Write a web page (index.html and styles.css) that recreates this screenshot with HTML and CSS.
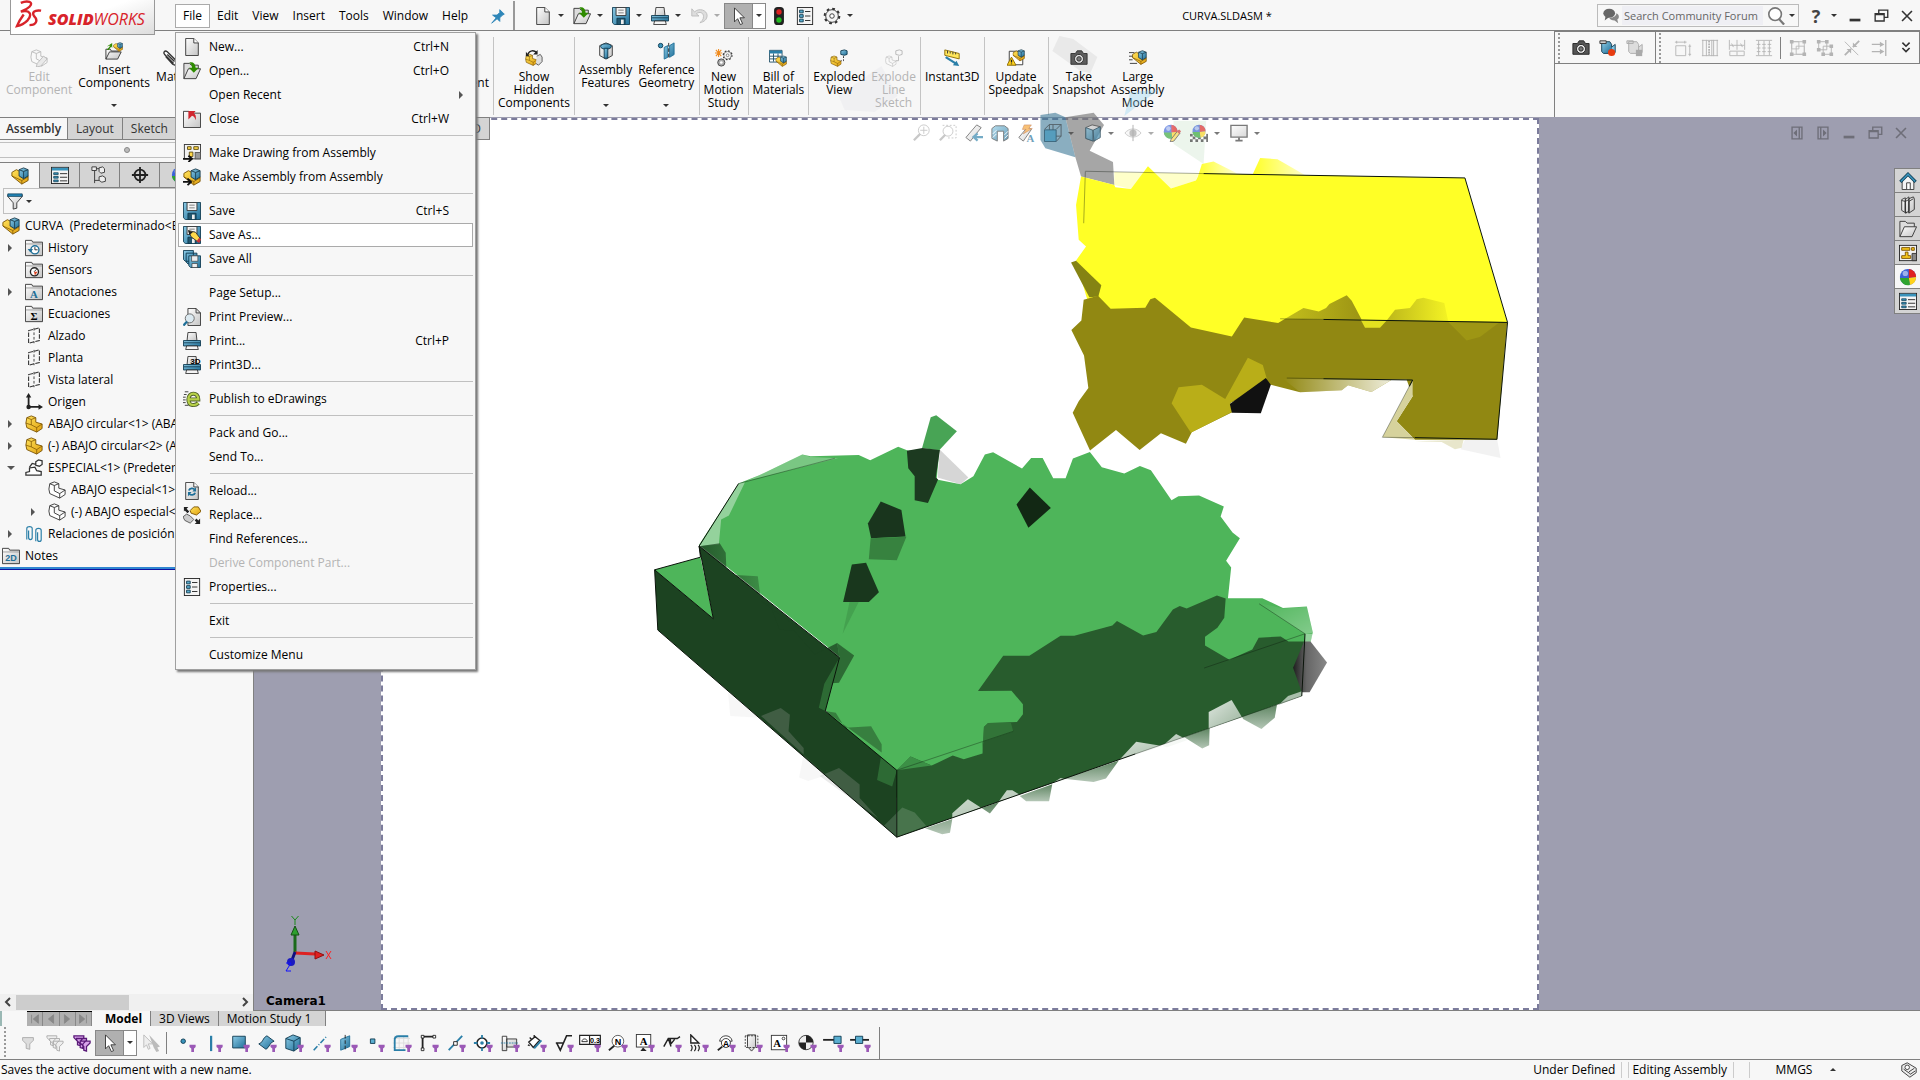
FILE: index.html
```html
<!DOCTYPE html>
<html lang="en">
<head>
    <meta charset="UTF-8">
    <title>SOLIDWORKS - CURVA.SLDASM</title>
    <link rel="stylesheet" href="styles.css">
</head>
<body>
    <svg class="sprite" aria-hidden="true">
        <defs>
            <linearGradient id="paper" x1="0" y1="0" x2="1" y2="1"><stop offset="0" stop-color="#fff"/><stop offset="1" stop-color="#c4c4c4"/></linearGradient>
            <linearGradient id="steel" x1="0" y1="0" x2="1" y2="1"><stop offset="0" stop-color="#8ccbe6"/><stop offset="1" stop-color="#1f6f98"/></linearGradient>
            <linearGradient id="gold" x1="0" y1="0" x2="1" y2="1"><stop offset="0" stop-color="#ffe25a"/><stop offset="1" stop-color="#e0a010"/></linearGradient>
        </defs>
    </svg>
    <svg class="symbols" aria-hidden="true">
        <symbol id="i-new" viewBox="0 0 20 20"><path d="M3 .500h9l5 5v14H3z" fill="url(#paper)" stroke="#333"/><path d="M12 .500v5h5" fill="#fff" stroke="#333"/></symbol>
        <symbol id="i-folder" viewBox="0 0 20 20"><path d="M1 18.500V1.500h6l2 2h8v4" fill="#ddd" stroke="#333"/><path d="M1 18.500L6 7.500h13.500l-5 11z" fill="url(#paper)" stroke="#333"/></symbol>
        <symbol id="i-open" viewBox="0 0 20 20"><use href="#i-folder"/><path d="M7 .500c4-1 7 1 7 6h3.500L12 12 6.500 6.500H10c0-3-1-4-3-6z" fill="#2e8b00"/></symbol>
        <symbol id="i-close" viewBox="0 0 20 20"><path d="M.500 19.500V1.500h6l1 2h12v16z" fill="url(#paper)" stroke="#333"/><path d="M6 1h8l-2 2.500c2 1 3 4 2 8-1-3.500-2-4.500-4-5l-4 4z" fill="#d0262f"/></symbol>
        <symbol id="i-block" viewBox="0 0 20 20"><path d="M1 9l1-6 5-2 5 2v5l7 2v5l-6 4-11-5z" fill="url(#gold)" stroke="#7a5200"/><path d="M2 3l5 2 5-2M7 5v6l6 3 6-4M13 14v5M1 9l6 2" fill="none" stroke="#7a5200" stroke-width=".8"/></symbol>
        <symbol id="i-asm" viewBox="0 0 20 20"><path d="M1 10V6l5-3 4 2v5l3 2 6-2v5l-7 4z" fill="url(#gold)" stroke="#7a5200"/><path d="M1 10l11 5v4M12 15l7-4" fill="none" stroke="#7a5200" stroke-width=".8"/><path d="M9 3l5-2 5 2v7l-5 3-5-3z" fill="url(#steel)" stroke="#1c3c4c"/><path d="M9 3l5 2 5-2M14 5v8" fill="none" stroke="#1c3c4c"/></symbol>
        <symbol id="i-makedrw" viewBox="0 0 20 20"><rect x="1.500" y=".5" width="18" height="16" fill="#f2f2f2" stroke="#333"/><path d="M5 3h4v3H5zM12 3h5v3h-5zM7 9h4v5H7z" fill="#ffd84a" stroke="#5a4a10"/><rect x="13.500" y="9.500" width="6" height="7" fill="#999" stroke="#555"/><path d="M0 16.500h9M6 13l4 3.500L6 20" fill="none" stroke="#111" stroke-width="2"/></symbol>
        <symbol id="i-makeasm" viewBox="0 0 20 20"><use href="#i-asm"/><path d="M0 15.500h8M5 12l4 3.500L5 19" fill="none" stroke="#111" stroke-width="2"/></symbol>
        <symbol id="i-save" viewBox="0 0 20 20"><path d="M.500 .500h19v19h-17l-2-2z" fill="url(#steel)" stroke="#0e3a50"/><path d="M4.500 .500h11v9h-11z" fill="#f4f4f4" stroke="#333"/><path d="M7 3.500h6M7 6.500h6" stroke="#777"/><path d="M5.500 12.500h9v7h-9z" fill="#23566e" stroke="#0e3a50"/><path d="M10 14h3v5h-3z" fill="#eee"/></symbol>
        <symbol id="i-saveas" viewBox="0 0 20 20"><use href="#i-save"/><path d="M6 5l3 7 8 6 3-3-6-8z" fill="#ffd84a" stroke="#333"/><path d="M6 5l1 5 4-3z" fill="#222"/><path d="M15 17l3 2 2-4-2-2z" fill="#c8323c"/></symbol>
        <symbol id="i-saveall" viewBox="0 0 20 20"><path d="M.500 .500h11v12h-9l-2-2zM3.500 3.500h12v12h-10l-2-2z" fill="url(#steel)" stroke="#0e3a50"/><path d="M6.500 6.500h13v13h-11l-2-2z" fill="url(#steel)" stroke="#0e3a50"/><path d="M9.500 6.500h7v6h-7zM10 15h6v4.500h-6z" fill="#eee" stroke="#333" stroke-width=".7"/></symbol>
        <symbol id="i-preview" viewBox="0 0 20 20"><path d="M5.500 .500h9l5 5v14h-14z" fill="url(#paper)" stroke="#333"/><path d="M14.500 .500v5h5" fill="none" stroke="#333"/><circle cx="7.500" cy="11.500" r="5" fill="#dbe9f0" stroke="#666"/><path d="M4.500 15L.500 19.500" stroke="#1f6f98" stroke-width="2.500"/></symbol>
        <symbol id="i-print" viewBox="0 0 20 20"><path d="M5.500 .500h9l1 9h-11z" fill="url(#paper)" stroke="#333"/><path d="M.500 9.500h19v6H.500z" fill="url(#steel)" stroke="#0e3a50"/><path d="M1 12h18" stroke="#0e3a50"/><path d="M4 15.500h12l1 4H3z" fill="#f4f4f4" stroke="#333"/></symbol>
        <symbol id="i-print3d" viewBox="0 0 20 20"><use href="#i-print"/><text x="8" y="9" class="icon-3d">3D</text></symbol>
        <symbol id="i-edraw" viewBox="0 0 20 20"><path d="M7 10.500h10c0-9-11-8-11 0 0 8 8 7 11 4" fill="none" stroke="#50602a" stroke-width="4.500"/><path d="M7 10.500h10c0-9-11-8-11 0 0 8 8 7 11 4" fill="none" stroke="#b7d148" stroke-width="2.500"/><path d="M2 2h4M1 5h3M0 8h3M0 11h3M0 14h3M2 17h4" stroke="#333"/></symbol>
        <symbol id="i-reload" viewBox="0 0 20 20"><use href="#i-new"/><path d="M6.500 9.500c1-3 5-3 6.500-1M13.500 12c-1 3-5 3-6.500 1" fill="none" stroke="#1f6f98" stroke-width="2"/><path d="M14.500 5.500v5h-4zM5.500 16v-5h4z" fill="#1f6f98"/></symbol>
        <symbol id="i-replace" viewBox="0 0 20 20"><path d="M8 5l4-4 5 0 3 5-5 4-6-2z" fill="url(#gold)" stroke="#7a5200"/><path d="M0 12l4-3 4 2 4 4-4 4-6-3z" fill="#ccc" stroke="#555"/><path d="M1 6V1h5L4 3l3 3-2 2-3-3zM19 14v6h-6l2-2-2-2 2-2 2 2z" fill="#222"/></symbol>
        <symbol id="i-props" viewBox="0 0 20 20"><rect x="1.500" y=".5" width="17" height="19" fill="#f4f4f4" stroke="#222"/><path d="M4 3.500h4v3H4zM4 8.500h4v3H4zM4 13.500h4v3H4z" fill="#5aaed0" stroke="#0e3a50"/><path d="M10 5h6M10 10h6M10 15h6" stroke="#222"/></symbol>
        <symbol id="i-list" viewBox="0 0 20 20"><rect x=".5" y="1.500" width="19" height="18" fill="#f4f4f4" stroke="#222"/><path d="M1 2h18v3H1z" fill="#3a94bc"/><path d="M3 7.500h5v2H3zM3 11.500h5v2H3zM3 15.500h5v2H3z" fill="#3a94bc" stroke="#0e3a50" stroke-width=".8"/><path d="M10 8.500h8M10 12.500h8M10 16.500h8" stroke="#222"/></symbol>
        <symbol id="i-cursor" viewBox="0 0 20 20"><path d="M5 1v15.500l3.500-3.500 3 6.500 2.500-1-3-6.500H16z" fill="#fff" stroke="#333"/></symbol>
        <symbol id="i-undo" viewBox="0 0 20 20"><path d="M2 2v8h8L7 7.500c4-3 8-1 8 3s-2 5-4 7c5-1 8-4 8-8 0-6-9-9-14-4z" fill="#ddd" stroke="#bbb"/></symbol>
        <symbol id="i-traffic" viewBox="0 0 20 20"><rect x="4.500" y="0" width="11" height="20" rx="4" fill="#222"/><circle cx="10" cy="5.500" r="3" fill="#d22"/><circle cx="10" cy="14.500" r="3" fill="#2b2"/></symbol>
        <symbol id="i-gear" viewBox="0 0 20 20"><circle cx="10" cy="10" r="8" fill="none" stroke="#333" stroke-width="2.500" stroke-dasharray="3 3.280"/><circle cx="10" cy="10" r="7" fill="#f4f4f4" stroke="#333"/><circle cx="10" cy="10" r="2.500" fill="#fff" stroke="#333"/></symbol>
        <symbol id="i-pin" viewBox="0 0 20 20"><path d="M12 3l5 5-2 1-3 3v4l-3-3-6 5 5-6-4-3h5l3-3z" fill="#2e86b8" stroke="#2e86b8"/></symbol>
        <symbol id="i-clip" viewBox="0 0 20 20"><path d="M14 16L4 6c-2-2 0-5 3-3l10 10c2 3-1 6-4 4L5 8M7 6l8 8" fill="none" stroke="#333" stroke-width="1.500"/></symbol>
        <symbol id="i-config" viewBox="0 0 20 20"><path d="M4 1v18M4 3h5M4 16h5" stroke="#333" fill="none"/><path d="M1 1h5v4H1zM9 2l4-1 2 2v4l-4 1-2-2zM9 12l4-1 3 2v4l-4 1-3-2z" fill="#eee" stroke="#333"/></symbol>
        <symbol id="i-target" viewBox="0 0 20 20"><circle cx="10" cy="10" r="6" fill="none" stroke="#222" stroke-width="2"/><path d="M10 1v18M1 10h18" stroke="#222" stroke-width="2"/></symbol>
        <symbol id="i-ball" viewBox="0 0 20 20"><circle cx="10" cy="10" r="9" fill="#3a62d8"/><path d="M11 1a9 9 0 0 1 8 9l-8 1z" fill="#e02020"/><path d="M19 10a9 9 0 0 1-7 9l-1-8z" fill="#ffd21c"/><path d="M12 19a9 9 0 0 1-11-8h10z" fill="#2fa42f"/><circle cx="7" cy="6" r="3" fill="#fff" opacity=".5"/></symbol>
        <symbol id="i-filter" viewBox="0 0 20 20"><path d="M2 3h16v2l-6 7v6l-4 1v-7L2 5z" fill="url(#paper)" stroke="#333"/><path d="M2 2h16v3H2z" fill="#1f7fb0" stroke="#0e3a50" stroke-width=".7"/></symbol>
        <symbol id="i-dir" viewBox="0 0 20 20"><path d="M.500 18.500V1.500h7l1 2h11v15z" fill="url(#paper)" stroke="#333"/><path d="M1 5.500h18" stroke="#999"/></symbol>
        <symbol id="i-history" viewBox="0 0 20 20"><use href="#i-dir"/><circle cx="11" cy="12" r="4.500" fill="#fff" stroke="#1f6f98" stroke-width="1.500"/><path d="M11 9v3h3" fill="none" stroke="#222"/><path d="M3 11h6l-3 4z" fill="#1f6f98"/></symbol>
        <symbol id="i-sensor" viewBox="0 0 20 20"><use href="#i-dir"/><circle cx="10.500" cy="12" r="4.500" fill="#fff" stroke="#222" stroke-width="1.500"/><path d="M10 12l3-3" stroke="#222"/><path d="M10 12h4l-3 4z" fill="#d42"/></symbol>
        <symbol id="i-annot" viewBox="0 0 20 20"><use href="#i-dir"/><text x="10" y="17" class="icon-letter steel">A</text></symbol>
        <symbol id="i-sigma" viewBox="0 0 20 20"><use href="#i-dir"/><text x="10" y="17" class="icon-letter">Σ</text></symbol>
        <symbol id="i-2d" viewBox="0 0 20 20"><use href="#i-dir"/><text x="10" y="16" class="icon-letter small steel">2D</text></symbol>
        <symbol id="i-plane" viewBox="0 0 20 20"><path d="M4 4l12-3v14L4 18z" fill="none" stroke="#333" stroke-width="1.200" stroke-dasharray="5 1.500"/><path d="M10 1v17" stroke="#333" stroke-dasharray="3 2"/></symbol>
        <symbol id="i-origin" viewBox="0 0 20 20"><path d="M4 3v12.500h13" fill="none" stroke="#222" stroke-width="2"/><path d="M4 0l3 5H1zM20 15.500l-5-3v6z" fill="#222"/><circle cx="4" cy="15.500" r="2.500" fill="#222"/></symbol>
        <symbol id="i-wire" viewBox="0 0 20 20"><path d="M1 9l1-6 5-2 5 2v5l7 2v5l-6 4-11-5zM2 3l5 2 5-2M7 5v6l6 3 6-4M13 14v5" fill="#fff" stroke="#333"/></symbol>
        <symbol id="i-wireasm" viewBox="0 0 20 20"><path d="M1 18h17v-4l-5-1-2-4-6 1v4l-4 1zM12 3l3-2 4 1v4l-3 2-4-1zM5 9l3-4 4 1" fill="#fff" stroke="#333" stroke-width="1.400"/></symbol>
        <symbol id="i-mates" viewBox="0 0 20 20"><path d="M2 16V4c0-3 6-3 6 0v10c0 3-4 3-4 0V6M12 18V6c0-3 6-3 6 0v10c0 3-4 3-4 0V8" fill="none" stroke="#2a7fa8" stroke-width="1.300"/></symbol>
        <symbol id="i-edit" viewBox="0 0 20 20"><g opacity=".3"><use href="#i-wire"/><path d="M8 16l7-8 4 3-7 8-5 1z" fill="#ccc" stroke="#333"/></g></symbol>
        <symbol id="i-insert" viewBox="0 0 20 20"><path d="M1 19V8h5l1 2h9M1 19l4-8h13l-4 8z" fill="url(#paper)" stroke="#333"/><path d="M2 9l4-5-4 1 6-4v6L7 5 4 9z" fill="#2e8b00"/><use href="#i-asm" x="9" y="0" width="11" height="11"/></symbol>
        <symbol id="i-showhide" viewBox="0 0 20 20"><use href="#i-block" x="0" y="5" width="14" height="14"/><path d="M13 8l4-2 2 3v5l-4 4-3-2" fill="#ddd" stroke="#555"/><path d="M3 6c2-5 7-5 10-2" fill="none" stroke="#222" stroke-width="1.500"/><path d="M14 1v5H9zM1 3v5h4z" fill="#222"/></symbol>
        <symbol id="i-features" viewBox="0 0 20 20"><path d="M3 4l7-3 7 3v11l-7 4-7-4z" fill="url(#paper)" stroke="#333"/><ellipse cx="10" cy="5" rx="6" ry="3" fill="url(#steel)" stroke="#0e3a50"/><path d="M8 7h4v11H8z" fill="url(#steel)" stroke="#0e3a50"/></symbol>
        <symbol id="i-refgeo" viewBox="0 0 20 20"><circle cx="4" cy="4" r="2.500" fill="#3a94bc" stroke="#0e3a50"/><path d="M8 6l4-2v13l-4 2zM14 4l5-3v13l-5 3z" fill="url(#steel)" stroke="#1f6f98"/><path d="M13 1v18" stroke="#222" stroke-dasharray="4 2"/></symbol>
        <symbol id="i-motion" viewBox="0 0 20 20"><use href="#i-gear" x="8" y="1" width="12" height="12"/><circle cx="7" cy="15" r="4" fill="#aaa" stroke="#444"/><circle cx="7" cy="15" r="1.500" fill="#fff"/><path d="M4 0v9M0 4.500h8M1 1l6 7M7 1L1 8" stroke="#f08a1c" stroke-width="1.200"/></symbol>
        <symbol id="i-bom" viewBox="0 0 20 20"><path d="M.500 1.500h14v13H.500z" fill="#fff" stroke="#1c4c64"/><path d="M.500 2h14v3H.500z" fill="#2a7fa8"/><path d="M1 8h13M1 11h13M5 5v9M10 5v9" stroke="#1c4c64"/><use href="#i-asm" x="7" y="7" width="13" height="13"/></symbol>
        <symbol id="i-explode" viewBox="0 0 20 20"><use href="#i-block" x="0" y="7" width="13" height="13"/><path d="M12 2l4-1 3 1v4l-3 1-4-1z" fill="url(#steel)" stroke="#0e3a50"/><path d="M15 8v5h-3" fill="none" stroke="#222" stroke-dasharray="2 1.500"/></symbol>
        <symbol id="i-explodeline" viewBox="0 0 20 20"><g opacity=".3"><use href="#i-wire" x="0" y="7" width="13" height="13"/><path d="M12 2l4-1 3 1v4l-3 1-4-1zM15 8v5h-3" fill="none" stroke="#222"/></g></symbol>
        <symbol id="i-instant" viewBox="0 0 20 20"><path d="M2 1l16 4v6L2 7z" fill="#ffe65a" stroke="#8a6a00"/><path d="M5 2v3M8 3v2M11 3v3M14 4v2" stroke="#333"/><path d="M3 9l11 7" stroke="#2a7fa8" stroke-width="2.500"/><path d="M18 19l-7-1 4-5z" fill="#2a7fa8"/></symbol>
        <symbol id="i-speedpak" viewBox="0 0 20 20"><path d="M2.500 2.500h15v15h-15z" fill="#fff" stroke="#333"/><use href="#i-asm" x="6" y="0" width="14" height="14"/><path d="M5 9l5 9H0z" fill="#ffd21c" stroke="#8a6a00"/><path d="M5 12v3M5 16v1" stroke="#222" stroke-width="1.500"/></symbol>
        <symbol id="i-camera" viewBox="0 0 20 20"><path d="M1 5h5l2-3h5l2 3h4v12H1z" fill="#555" stroke="#222"/><circle cx="10" cy="11" r="5" fill="#eee" stroke="#222"/><circle cx="10" cy="11" r="2.500" fill="#777" stroke="#222"/></symbol>
        <symbol id="i-large" viewBox="0 0 20 20"><use href="#i-asm" x="3" y="1" width="17" height="17"/><path d="M0 4h6M0 8h4M0 12h4M1 16h8" stroke="#333"/></symbol>
        <symbol id="i-video" viewBox="0 0 20 20"><path d="M3 3h9l2 3v10H5l-2-2z" fill="url(#steel)" stroke="#0e3a50"/><path d="M14 9l4-3v9l-4-3" fill="#7fc4e4" stroke="#0e3a50"/><path d="M1 2h7v3H1z" fill="#ccc" stroke="#333"/><circle cx="14" cy="15" r="4" fill="#e83c10"/></symbol>
        <symbol id="i-videostop" viewBox="0 0 20 20"><path d="M3 3h9l2 3v10H5l-2-2zM14 9l4-3v9l-4-3M1 2h7v3H1z" fill="#ddd" stroke="#aaa"/><rect x="11" y="12" width="7" height="7" fill="#aaa"/></symbol>
        <symbol id="i-dimbox" viewBox="0 0 20 20"><path d="M2 7.500h11v11H2zM1 3.500h13M3 2v3M12 2v3M17.500 6v13M16 8h3M16 17h3" fill="none" stroke="#b4b4b4"/></symbol>
        <symbol id="i-dimcols" viewBox="0 0 20 20"><path d="M2 1v18M6 1v18M14 1v18M18 1v18M1 1.500h18M1 18.500h18M12 1v18" fill="none" stroke="#b4b4b4"/><path d="M9 2v16" stroke="#b4b4b4" stroke-width="2" stroke-dasharray="2 1"/></symbol>
        <symbol id="i-dimmid" viewBox="0 0 20 20"><path d="M1.500 1v11M18.500 1v11M10 1v11M2 7h16M4 5l2 4M14 5l2 4M2 13.500h16v5H2zM10 14v4" fill="none" stroke="#b4b4b4"/></symbol>
        <symbol id="i-dimthree" viewBox="0 0 20 20"><path d="M1 1.500h18M1 18.500h18M4 2v16M10 2v16M16 2v16M2 6h4M8 6h4M14 6h4M2 10h4M8 10h4M14 10h4M2 14h4M8 14h4M14 14h4" fill="none" stroke="#b4b4b4"/></symbol>
        <symbol id="i-group" viewBox="0 0 20 20"><path d="M3 3h8v8H3zM8 8h9v9H8zM3 3h14v14H3z" fill="none" stroke="#bbb"/><path d="M1 1h4v4H1zM15 1h4v4h-4zM15 15h4v4h-4zM1 15h4v4H1z" fill="#b4b4b4"/></symbol>
        <symbol id="i-ungroup" viewBox="0 0 20 20"><path d="M3 3h9v9H3zM8 8h9v9H8z" fill="none" stroke="#b4b4b4"/><path d="M1 1h4v4H1zM10 1h4v4h-4zM1 10h4v4H1zM15 6h4v4h-4zM15 15h4v4h-4zM6 15h4v4H6z" fill="#b4b4b4"/></symbol>
        <symbol id="i-collapse" viewBox="0 0 20 20"><path d="M18 2l-7 7M2 18l7-7" stroke="#b4b4b4" stroke-width="2"/><path d="M11 4v5h5zM4 11h5v5z" fill="#b4b4b4"/><path d="M2 3l15 15" stroke="#b4b4b4"/></symbol>
        <symbol id="i-alignr" viewBox="0 0 20 20"><path d="M17.500 1v18M2 6h11M2 14h11" stroke="#b4b4b4" stroke-width="1.500"/><path d="M11 3l5 3-5 3zM11 11l5 3-5 3z" fill="#b4b4b4"/></symbol>
        <symbol id="i-chev" viewBox="0 0 20 20"><path d="M6 4l4 4 4-4M6 10l4 4 4-4" fill="none" stroke="#333" stroke-width="1.800"/></symbol>
        <symbol id="i-chat" viewBox="0 0 20 20"><ellipse cx="8" cy="7" rx="6.500" ry="5" fill="#666"/><path d="M4 10l-1 5 5-4z" fill="#666"/><path d="M16 7c4 2 3 6 1 7l1 4-4-3c-3 0-5-1-6-3 5 0 8-2 8-5z" fill="#888"/></symbol>
        <symbol id="i-search" viewBox="0 0 20 20"><circle cx="9" cy="8" r="7" fill="#fff" stroke="#777" stroke-width="1.800"/><path d="M13 13l6 6.500" stroke="#777" stroke-width="2.500"/></symbol>
        <symbol id="i-min" viewBox="0 0 20 20"><path d="M4 14.500h12" stroke="currentColor" stroke-width="3"/></symbol>
        <symbol id="i-restore" viewBox="0 0 20 20"><path d="M7.500 7V3.500h10v8H14M3.500 7.500h10v8h-10zM3.500 8.500h10" fill="none" stroke="currentColor" stroke-width="1.500"/></symbol>
        <symbol id="i-x" viewBox="0 0 20 20"><path d="M4.500 4.500l11 11M15.500 4.500l-11 11" stroke="currentColor" stroke-width="1.800"/></symbol>
        <symbol id="i-prev" viewBox="0 0 20 20"><path d="M4.500 3.500h11v13h-11zM12.500 4v12" fill="none" stroke="currentColor" stroke-width="1.500"/><path d="M10 6v8l-4-4z" fill="currentColor"/></symbol>
        <symbol id="i-next" viewBox="0 0 20 20"><path d="M4.500 3.500h11v13h-11zM7.500 4v12" fill="none" stroke="currentColor" stroke-width="1.500"/><path d="M10 6v8l4-4z" fill="currentColor"/></symbol>
        <symbol id="i-fit" viewBox="0 0 20 20"><circle cx="12" cy="7" r="6" fill="#fff" stroke="#777"/><path d="M12 3v8M8 7h8" stroke="#777"/><path d="M8 11l-7 7" stroke="#777" stroke-width="2.500"/></symbol>
        <symbol id="i-area" viewBox="0 0 20 20"><path d="M4 1.500h15v14H9" fill="none" stroke="#777" stroke-dasharray="2 2"/><circle cx="10" cy="8" r="5.500" fill="#fff" stroke="#777"/><path d="M7 12l-6 6" stroke="#777" stroke-width="2.500"/></symbol>
        <symbol id="i-prevview" viewBox="0 0 20 20"><path d="M1 15L13 1l5 3L6 19z" fill="url(#paper)" stroke="#333"/><path d="M10 14.500h10M14 10.500l-4.500 4 4.500 4" stroke="#2a7fa8" stroke-width="2.500" fill="none"/></symbol>
        <symbol id="i-section" viewBox="0 0 20 20"><path d="M1 5l4-3h10l4 3v11l-5 3V8H7v11l-6-3z" fill="url(#steel)" stroke="#333"/><path d="M2 11l4-4M2 15l4-4M15 12l4-4M15 16l4-4" stroke="#fff"/></symbol>
        <symbol id="i-dynamic" viewBox="0 0 20 20"><path d="M2 15L12 3l4 3L7 19z" fill="url(#paper)" stroke="#333"/><path d="M8 1h8l-3 4h4l-10 6 3-5H6z" fill="#f5a030" stroke="#b05010" stroke-width=".6"/><text x="15" y="20" class="icon-letter steel">A</text></symbol>
        <symbol id="i-cubewire" viewBox="0 0 20 20"><path d="M6 .500h13v13H6zM.500 6L6 .500M13.500 6l5.500-5.500M13.500 19.500l5.500-6M10 1v12" fill="none" stroke="#333"/><path d="M.500 6.500h13v13H.500z" fill="#3a94bc" stroke="#0e3a50"/></symbol>
        <symbol id="i-cube" viewBox="0 0 20 20"><path d="M2 4l7-3 9 2v12l-7 4-9-3z" fill="url(#paper)" stroke="#333"/><path d="M2 4l8 3v12l-8-3zM10 7l8-4v12l-7 4z" fill="url(#steel)" stroke="#0e3a50"/></symbol>
        <symbol id="i-eye" viewBox="0 0 20 20"><path d="M1 10c5-6 13-6 18 0-5 6-13 6-18 0z" fill="#eee" stroke="#777"/><circle cx="10" cy="10" r="4" fill="#666"/><path d="M10 1v18" stroke="#333"/></symbol>
        <symbol id="i-appear" viewBox="0 0 20 20"><use href="#i-ball" width="17" height="17"/><path d="M9 17l7-9 3 2-7 9-4 1z" fill="#ffd84a" stroke="#333"/><path d="M15 8l3 3 2-3-2-2z" fill="#c33"/></symbol>
        <symbol id="i-scene" viewBox="0 0 20 20"><path d="M0 11h20v9H0z" fill="#333"/><path d="M3 11h3v3H3zM9 11h3v3H9zM15 11h3v3h-3zM0 14h3v3H0zM6 14h3v3H6zM12 14h3v3h-3zM3 17h3v3H3zM9 17h3v3H9zM15 17h3v3h-3z" fill="#fff"/><use href="#i-ball" x="2" y="0" width="16" height="16"/></symbol>
        <symbol id="i-monitor" viewBox="0 0 20 20"><path d="M1 1.500h18v13H1z" fill="url(#paper)" stroke="#333" stroke-width="1.500"/><path d="M10 15v3M6 18.500h8" stroke="#333" stroke-width="2"/></symbol>
        <symbol id="i-home" viewBox="0 0 20 20"><path d="M3.500 9v10.500h13V9L10 3z" fill="#f4f4f4" stroke="#333"/><path d="M8.500 19v-7h4v7" fill="#fff" stroke="#333"/><path d="M1.500 11L10 2.500l8.500 8.500" fill="none" stroke="#0e3a50" stroke-width="3.500"/><path d="M2 10.500l8-8 8 8" fill="none" stroke="#3a94bc" stroke-width="1.800"/></symbol>
        <symbol id="i-books" viewBox="0 0 20 20"><path d="M3 4l4-2v14l1 3-5-3zM7 4l4-3v16l-4 2zM11 3l5-2 1 2v12l-6 4z" fill="url(#paper)" stroke="#333"/><path d="M3 5l4 1v12M7 6l4-2M11 6l5-3M11 6v13" stroke="#333" fill="none"/></symbol>
        <symbol id="i-palette" viewBox="0 0 20 20"><rect x=".5" y="1.500" width="19" height="17" fill="#f2f2f2" stroke="#222"/><path d="M3 4h9v3H3zM14 4h3v3h-3zM7 9h3v4h3v3H3v-3h4z" fill="#f6c61c" stroke="#7a5200"/><path d="M14.500 10.500h5v8h-5z" fill="#888" stroke="#333"/></symbol>
        <symbol id="i-funnel" viewBox="0 0 20 20"><path d="M4 4h12v3l-4 4v6l-4-1v-5L4 7z" fill="#ddd" stroke="#aaa"/></symbol>
        <symbol id="i-funnels" viewBox="0 0 20 20"><path d="M1 2h11v2l-4 4v5l-3-1V8L1 4zM4 5h11v2l-4 4v5l-3-1v-4L4 7zM8 8h11v2l-4 4v5l-3-1v-4L8 10z" fill="#eee" stroke="#aaa"/></symbol>
        <symbol id="i-funnelsp" viewBox="0 0 20 20"><path d="M1 2h11v2l-4 4v5l-3-1V8L1 4zM4 5h11v2l-4 4v5l-3-1v-4L4 7zM8 8h11v2l-4 4v5l-3-1v-4L8 10z" fill="#d9a4ea" stroke="#5a1a78" stroke-width="1.400"/></symbol>
        <symbol id="i-cursors" viewBox="0 0 20 20"><path d="M8 1l12 13-3 1 2 4-3 1-3-5z" fill="#bbb"/><path d="M2 1v14l3-3 2 5 2-1-2-5h5z" fill="#eee" stroke="#bbb"/></symbol>
        <symbol id="f" viewBox="0 0 24 20"><path d="M17 12h7v2.500l-2 1.500v4h-3v-4l-2-1.500z" fill="#9b59b6"/></symbol>
        <symbol id="t-1" viewBox="0 0 24 20"><circle cx="10" cy="8" r="2.500" fill="#3a94bc" stroke="#0e3a50"/><use href="#f"/></symbol>
        <symbol id="t-2" viewBox="0 0 24 20"><path d="M11 2v17" stroke="#2a7fa8" stroke-width="2.500"/><use href="#f"/></symbol>
        <symbol id="t-3" viewBox="0 0 24 20"><path d="M5 2.500h14v13H5z" fill="url(#steel)" stroke="#0e3a50"/><use href="#f"/></symbol>
        <symbol id="t-4" viewBox="0 0 24 20"><path d="M4 11c5-1 4-7 9-9l8 6c-5 1-5 7-9 9z" fill="url(#steel)" stroke="#0e3a50"/><use href="#f"/></symbol>
        <symbol id="t-5" viewBox="0 0 24 20"><path d="M4 5l8-4 8 3v10l-7 5-9-3z" fill="url(#steel)" stroke="#0e3a50"/><path d="M4 5l9 3 7-4M13 8v11" fill="none" stroke="#0e3a50"/><use href="#f"/></symbol>
        <symbol id="t-6" viewBox="0 0 24 20"><path d="M5 18L20 2" stroke="#2a7fa8" stroke-width="1.800" stroke-dasharray="6 2 1 2"/><use href="#f"/></symbol>
        <symbol id="t-7" viewBox="0 0 24 20"><path d="M5 6l10-4v12L5 18z" fill="url(#steel)" stroke="#1f6f98"/><path d="M10 1v18" stroke="#222" stroke-dasharray="4 2"/><use href="#f"/></symbol>
        <symbol id="t-8" viewBox="0 0 24 20"><path d="M8 5.500h5v5H8z" fill="#5aaed0" stroke="#0e3a50"/><use href="#f"/></symbol>
        <symbol id="t-9" viewBox="0 0 24 20"><path d="M5 2v17M10 2v17M15 2v17M20 2v17M3 5h19M3 10h19M3 15h19" stroke="#ddd"/><path d="M20 2.500H9q-4 0-4 4V18h12" fill="none" stroke="#2a7fa8" stroke-width="2"/><use href="#f"/></symbol>
        <symbol id="t-10" viewBox="0 0 24 20"><path d="M6 17V3h13" fill="none" stroke="#222" stroke-width="2"/><path d="M4.500 15.500h3v3h-3zM4.500 1.500h3v3h-3zM17.500 1.500h3v3h-3z" fill="#fff" stroke="#222"/><use href="#f"/></symbol>
        <symbol id="t-11" viewBox="0 0 24 20"><path d="M5 18L20 2" stroke="#2a7fa8" stroke-width="2"/><path d="M10.500 8.500h4v4h-4z" fill="#fff" stroke="#222"/><use href="#f"/></symbol>
        <symbol id="t-12" viewBox="0 0 24 20"><circle cx="12" cy="10" r="5.500" fill="#fff" stroke="#222" stroke-width="1.800"/><path d="M12 1v4M12 15v4M3 10h4M17 10h4" stroke="#2a7fa8" stroke-width="2"/><circle cx="12" cy="10" r="2" fill="#2a7fa8"/><use href="#f"/></symbol>
        <symbol id="t-13" viewBox="0 0 24 20"><path d="M4.500 2.500h5v16h-5zM9.500 5.500h11v9h-11z" fill="url(#paper)" stroke="#333"/><path d="M3 10h19" stroke="#2a7fa8" stroke-dasharray="2 1"/><use href="#f"/></symbol>
        <symbol id="t-14" viewBox="0 0 24 20"><path d="M4 9l7-6 5 4-7 8zM7 6l-2-2M10 4V1M5 13l-2-1" fill="#fff" stroke="#222" stroke-width="1.500"/><path d="M10 16l8-9" stroke="#2a7fa8" stroke-width="2"/><use href="#f"/></symbol>
        <symbol id="t-15" viewBox="0 0 24 20"><path d="M4 10h9M5 10l4 8L16 2h6" fill="none" stroke="#222" stroke-width="1.800"/><use href="#f"/></symbol>
        <symbol id="t-16" viewBox="0 0 24 20"><path d="M.500 1.500h23v10H.500zM11.500 1.500v10" fill="#fff" stroke="#222" stroke-width="1.300"/><path d="M3 8.500c0-4 6-4 6 0z" fill="none" stroke="#222"/><text x="17.500" y="10" class="icon-tiny">0.3</text><use href="#f"/></symbol>
        <symbol id="t-17" viewBox="0 0 24 20"><circle cx="13" cy="8" r="6.500" fill="#fff" stroke="#555"/><text x="13" y="12" class="icon-letter small">N</text><path d="M9 13l-6 5" stroke="#222" stroke-width="2"/><use href="#f"/></symbol>
        <symbol id="t-18" viewBox="0 0 24 20"><rect x="3.500" y=".5" width="16" height="14" fill="#fff" stroke="#333"/><text x="11.500" y="12" class="icon-letter">A</text><path d="M8 19l3-4 4 4z" fill="#222"/><use href="#f"/></symbol>
        <symbol id="t-19" viewBox="0 0 24 20"><path d="M4 14l5-9h10l3-2M11 5l1 6 4-5M9 5l3 9" fill="none" stroke="#222" stroke-width="1.600"/><use href="#f"/></symbol>
        <symbol id="t-20" viewBox="0 0 24 20"><path d="M4 1v9h9z" fill="#fff" stroke="#222" stroke-width="1.500"/><path d="M4 12q3 3 0 7M8 12q3 3 0 7M12 12q3 3 0 7" fill="none" stroke="#222" stroke-width="1.300"/><use href="#f"/></symbol>
        <symbol id="t-21" viewBox="0 0 24 20"><path d="M6 8c1-8 13-8 14 0z" fill="#fff" stroke="#333"/><circle cx="13" cy="10" r="5" fill="#fff" stroke="#333"/><text x="13" y="14" class="icon-letter small">A</text><path d="M9 14l-5 4" stroke="#222" stroke-width="2"/><use href="#f"/></symbol>
        <symbol id="t-22" viewBox="0 0 24 20"><path d="M7 1h9v13l-4.500 5L7 14z" fill="url(#paper)" stroke="#333"/><path d="M4.500 2v13h14V2z" fill="none" stroke="#333" stroke-dasharray="2 1.500"/><use href="#f"/></symbol>
        <symbol id="t-23" viewBox="0 0 24 20"><rect x="3.500" y="1.500" width="17" height="16" fill="#fff" stroke="#333"/><text x="10" y="14" class="icon-letter">A</text><circle cx="17" cy="5" r="1.500" fill="none" stroke="#333"/><use href="#f"/></symbol>
        <symbol id="t-24" viewBox="0 0 24 20"><circle cx="12" cy="9.500" r="8" fill="#eee" stroke="#333"/><path d="M12 9.500v-8a8 8 0 0 1 8 8zM12 9.500v8a8 8 0 0 1-8-8z" fill="#222"/><use href="#f"/></symbol>
        <symbol id="t-25" viewBox="0 0 24 20"><path d="M1 6.500h13" stroke="#222" stroke-width="2"/><path d="M13 2.500h8v8h-8z" fill="#5aaed0" stroke="#0e3a50"/><use href="#f"/></symbol>
        <symbol id="t-26" viewBox="0 0 24 20"><path d="M1 6.500h21" stroke="#222" stroke-width="2"/><path d="M7 2.500h8v8H7z" fill="#5aaed0" stroke="#0e3a50"/><use href="#f"/></symbol>
        <symbol id="i-tag" viewBox="0 0 20 20"><path d="M2 5l6-3 10 6v5l-7 5-9-7z" fill="#eee" stroke="#333"/><circle cx="8" cy="7" r="2.500" fill="#fff" stroke="#333"/><path d="M10 12l6-4M11 15l6-4M4 9l7 5" stroke="#333"/></symbol>
    </svg>

    <header class="title-bar">
        <div class="logo">
            <svg viewBox="0 0 28 30" aria-hidden="true"><path d="M5 3c7-3 14-1 9 4-3 3-6 4-9 5 10-2 12 3 7 9-3 3-6 5-11 6 2-5 4-8 7-12M26 11c-7-1-10 2-7 6 4 4 2 9-5 9" fill="none" stroke="#d8232a" stroke-width="2.500"/></svg>
            <span class="brand"><b>SOLID</b>WORKS</span>
        </div>
        <nav class="menu-bar">
            <button class="open">File</button><button>Edit</button><button>View</button><button>Insert</button><button>Tools</button><button>Window</button><button>Help</button>
            <button class="pin" aria-label="Pin menu"><svg class="icon"><use href="#i-pin"/></svg></button>
        </nav>
        <div class="quick-tools">
            <button aria-label="New"><svg class="icon"><use href="#i-new"/></svg><i class="caret"></i></button>
            <button aria-label="Open"><svg class="icon"><use href="#i-open"/></svg><i class="caret"></i></button>
            <button aria-label="Save"><svg class="icon"><use href="#i-save"/></svg><i class="caret"></i></button>
            <button aria-label="Print"><svg class="icon"><use href="#i-print"/></svg><i class="caret"></i></button>
            <button aria-label="Undo" disabled><svg class="icon"><use href="#i-undo"/></svg><i class="caret"></i></button>
            <span class="select-tool"><button class="pressed" aria-label="Select"><svg class="icon"><use href="#i-cursor"/></svg></button><button class="drop" aria-label="Select options"><i class="caret"></i></button></span>
            <button class="solo" aria-label="Rebuild"><svg class="icon"><use href="#i-traffic"/></svg></button>
            <button class="solo" aria-label="File properties"><svg class="icon"><use href="#i-props"/></svg></button>
            <button aria-label="Options"><svg class="icon"><use href="#i-gear"/></svg><i class="caret"></i></button>
        </div>
        <h1 class="doc-title">CURVA.SLDASM *</h1>
        <div class="title-right">
            <div class="search">
                <svg class="icon"><use href="#i-chat"/></svg>
                <input type="text" placeholder="Search Community Forum" aria-label="Search Community Forum">
                <button aria-label="Search"><svg class="icon"><use href="#i-search"/></svg><i class="caret"></i></button>
            </div>
            <button class="help" aria-label="Help">?</button><button class="help-drop" aria-label="Help options"><i class="caret"></i></button>
            <button class="win" aria-label="Minimize"><svg class="icon"><use href="#i-min"/></svg></button>
            <button class="win" aria-label="Restore"><svg class="icon"><use href="#i-restore"/></svg></button>
            <button class="win" aria-label="Close"><svg class="icon"><use href="#i-x"/></svg></button>
        </div>

        <ul class="file-menu">
            <li><button><svg class="icon"><use href="#i-new"/></svg><span>New...</span><kbd>Ctrl+N</kbd></button></li>
            <li><button><svg class="icon"><use href="#i-open"/></svg><span>Open...</span><kbd>Ctrl+O</kbd></button></li>
            <li><button><i class="icon"></i><span>Open Recent</span><i class="sub-arrow"></i></button></li>
            <li><button><svg class="icon"><use href="#i-close"/></svg><span>Close</span><kbd>Ctrl+W</kbd></button></li>
            <li class="line"></li>
            <li><button><svg class="icon"><use href="#i-makedrw"/></svg><span>Make Drawing from Assembly</span></button></li>
            <li><button><svg class="icon"><use href="#i-makeasm"/></svg><span>Make Assembly from Assembly</span></button></li>
            <li class="line"></li>
            <li><button><svg class="icon"><use href="#i-save"/></svg><span>Save</span><kbd>Ctrl+S</kbd></button></li>
            <li><button class="current"><svg class="icon"><use href="#i-saveas"/></svg><span>Save As...</span></button></li>
            <li><button><svg class="icon"><use href="#i-saveall"/></svg><span>Save All</span></button></li>
            <li class="line"></li>
            <li><button><i class="icon"></i><span>Page Setup...</span></button></li>
            <li><button><svg class="icon"><use href="#i-preview"/></svg><span>Print Preview...</span></button></li>
            <li><button><svg class="icon"><use href="#i-print"/></svg><span>Print...</span><kbd>Ctrl+P</kbd></button></li>
            <li><button><svg class="icon"><use href="#i-print3d"/></svg><span>Print3D...</span></button></li>
            <li class="line"></li>
            <li><button><svg class="icon"><use href="#i-edraw"/></svg><span>Publish to eDrawings</span></button></li>
            <li class="line"></li>
            <li><button><i class="icon"></i><span>Pack and Go...</span></button></li>
            <li><button><i class="icon"></i><span>Send To...</span></button></li>
            <li class="line"></li>
            <li><button><svg class="icon"><use href="#i-reload"/></svg><span>Reload...</span></button></li>
            <li><button><svg class="icon"><use href="#i-replace"/></svg><span>Replace...</span></button></li>
            <li><button><i class="icon"></i><span>Find References...</span></button></li>
            <li><button disabled><i class="icon"></i><span>Derive Component Part...</span></button></li>
            <li><button><svg class="icon"><use href="#i-props"/></svg><span>Properties...</span></button></li>
            <li class="line"></li>
            <li><button><i class="icon"></i><span>Exit</span></button></li>
            <li class="line"></li>
            <li><button><i class="icon"></i><span>Customize Menu</span></button></li>
        </ul>
    </header>

    <div class="ribbon-row">
        <div class="ribbon">
            <div class="group first">
                <button disabled><svg class="icon"><use href="#i-edit"/></svg>Edit<br>Component</button>
                <button class="has-drop"><svg class="icon"><use href="#i-insert"/></svg>Insert<br>Components<i class="caret"></i></button>
                <button><svg class="icon"><use href="#i-clip"/></svg>Mate</button>
                <button class="has-drop last">Move<br>Component<i class="caret"></i></button>
            </div>
            <div class="group"><button><svg class="icon"><use href="#i-showhide"/></svg>Show<br>Hidden<br>Components</button></div>
            <div class="group">
                <button class="has-drop"><svg class="icon"><use href="#i-features"/></svg>Assembly<br>Features<i class="caret"></i></button>
                <button class="has-drop"><svg class="icon"><use href="#i-refgeo"/></svg>Reference<br>Geometry<i class="caret"></i></button>
            </div>
            <div class="group"><button><svg class="icon"><use href="#i-motion"/></svg>New<br>Motion<br>Study</button></div>
            <div class="group"><button><svg class="icon"><use href="#i-bom"/></svg>Bill of<br>Materials</button></div>
            <div class="group">
                <button><svg class="icon"><use href="#i-explode"/></svg>Exploded<br>View</button>
                <button disabled><svg class="icon"><use href="#i-explodeline"/></svg>Explode<br>Line<br>Sketch</button>
            </div>
            <div class="group"><button><svg class="icon"><use href="#i-instant"/></svg>Instant3D</button></div>
            <div class="group"><button><svg class="icon"><use href="#i-speedpak"/></svg>Update<br>Speedpak</button></div>
            <div class="group">
                <button><svg class="icon"><use href="#i-camera"/></svg>Take<br>Snapshot</button>
                <button><svg class="icon"><use href="#i-large"/></svg>Large<br>Assembly<br>Mode</button>
            </div>
        </div>
        <div class="side-tools">
            <div class="tool-strip capture">
                <button aria-label="Image capture"><svg class="icon"><use href="#i-camera"/></svg></button>
                <button aria-label="Record video"><svg class="icon"><use href="#i-video"/></svg></button>
                <button aria-label="Stop video" disabled><svg class="icon"><use href="#i-videostop"/></svg></button>
            </div>
            <div class="tool-strip align">
                <button aria-label="Size box" disabled><svg class="icon"><use href="#i-dimbox"/></svg></button>
                <button aria-label="Columns" disabled><svg class="icon"><use href="#i-dimcols"/></svg></button>
                <button aria-label="Center" disabled><svg class="icon"><use href="#i-dimmid"/></svg></button>
                <button aria-label="Distribute" disabled><svg class="icon"><use href="#i-dimthree"/></svg></button>
                <i class="bar"></i>
                <button aria-label="Group" disabled><svg class="icon"><use href="#i-group"/></svg></button>
                <button aria-label="Ungroup" disabled><svg class="icon"><use href="#i-ungroup"/></svg></button>
                <button aria-label="Collapse" disabled><svg class="icon"><use href="#i-collapse"/></svg></button>
                <button aria-label="Align right" disabled><svg class="icon"><use href="#i-alignr"/></svg></button>
                <button aria-label="More"><svg class="icon"><use href="#i-chev"/></svg></button>
            </div>
        </div>
    </div>

    <main class="workspace">
        <aside class="sidebar">
            <nav class="command-tabs">
                <button class="active">Assembly</button><button>Layout</button><button>Sketch</button><button>Evaluate</button><button class="mbd">SOLIDWORKS MBD</button>
            </nav>
            <div class="splitter"><i></i></div>
            <nav class="panel-tabs">
                <button class="active" aria-label="Feature tree"><svg class="icon"><use href="#i-asm"/></svg></button>
                <button aria-label="Property manager"><svg class="icon"><use href="#i-list"/></svg></button>
                <button aria-label="Configurations"><svg class="icon"><use href="#i-config"/></svg></button>
                <button aria-label="Dimensions"><svg class="icon"><use href="#i-target"/></svg></button>
                <button aria-label="Display manager"><svg class="icon"><use href="#i-ball"/></svg></button>
            </nav>
            <button class="filter" aria-label="Filter tree"><svg class="icon"><use href="#i-filter"/></svg><i class="caret"></i></button>
            <ul class="tree">
                <li class="root"><svg class="icon"><use href="#i-asm"/></svg>CURVA&nbsp; (Predeterminado&lt;Especial&gt;)</li>
                <li><i class="twist"></i><svg class="icon"><use href="#i-history"/></svg>History</li>
                <li><i class="twist none"></i><svg class="icon"><use href="#i-sensor"/></svg>Sensors</li>
                <li><i class="twist"></i><svg class="icon"><use href="#i-annot"/></svg>Anotaciones</li>
                <li><i class="twist none"></i><svg class="icon"><use href="#i-sigma"/></svg>Ecuaciones</li>
                <li><i class="twist none"></i><svg class="icon"><use href="#i-plane"/></svg>Alzado</li>
                <li><i class="twist none"></i><svg class="icon"><use href="#i-plane"/></svg>Planta</li>
                <li><i class="twist none"></i><svg class="icon"><use href="#i-plane"/></svg>Vista lateral</li>
                <li><i class="twist none"></i><svg class="icon"><use href="#i-origin"/></svg>Origen</li>
                <li><i class="twist"></i><svg class="icon"><use href="#i-block"/></svg>ABAJO circular&lt;1&gt; (ABAJO)</li>
                <li><i class="twist"></i><svg class="icon"><use href="#i-block"/></svg>(-) ABAJO circular&lt;2&gt; (ABAJO)</li>
                <li><i class="twist down"></i><svg class="icon"><use href="#i-wireasm"/></svg>ESPECIAL&lt;1&gt; (Predeterminado)</li>
                <li class="child"><i class="twist none"></i><svg class="icon"><use href="#i-wire"/></svg>ABAJO especial&lt;1&gt;</li>
                <li class="child"><i class="twist"></i><svg class="icon"><use href="#i-wire"/></svg>(-) ABAJO especial&lt;2&gt;</li>
                <li><i class="twist"></i><svg class="icon"><use href="#i-mates"/></svg>Relaciones de posición</li>
                <li class="root"><svg class="icon"><use href="#i-2d"/></svg>Notes</li>
            </ul>
            <div class="scroll">
                <svg viewBox="0 0 16 16"><path d="M10 4L6 8l4 4" /></svg>
                <div class="track"><i class="thumb"></i></div>
                <svg viewBox="0 0 16 16"><path d="M6 4l4 4-4 4" /></svg>
            </div>
        </aside>

        <section class="viewport">
            <div class="camera-frame">
                <svg class="model" viewBox="381 118 1157 893" role="img" aria-label="Assembly model">
                    <defs>
                        <linearGradient id="fadeY" x1="0" x2="1"><stop offset="0" stop-color="#fff" stop-opacity="0"/><stop offset="1" stop-color="#fff" stop-opacity=".85"/></linearGradient>
                        <linearGradient id="fadeL" x1="0" x2="1"><stop offset="0" stop-color="#ffff26"/><stop offset="1" stop-color="#ffff26" stop-opacity=".2"/></linearGradient>
                        <linearGradient id="fadeT" x1="0" x2="1"><stop offset="0" stop-color="#918812" stop-opacity=".55"/><stop offset="1" stop-color="#918812" stop-opacity=".9"/></linearGradient>
                        <linearGradient id="fadeR" x1="0" x2="1"><stop offset="0" stop-color="#918812" stop-opacity=".6"/><stop offset="1" stop-color="#918812" stop-opacity=".1"/></linearGradient>
                        <linearGradient id="fadeG" x1="0" y1="0" x2="0" y2="1"><stop offset="0" stop-color="#285c2d" stop-opacity=".75"/><stop offset="1" stop-color="#285c2d" stop-opacity=".35"/></linearGradient>
                        <linearGradient id="fadeW" x1="0" x2="1" y1="0" y2="1"><stop offset="0" stop-color="#fff" stop-opacity=".85"/><stop offset="1" stop-color="#e8efe8" stop-opacity=".6"/></linearGradient>
                        <linearGradient id="fadeD" x1="0" x2="1"><stop offset="0" stop-color="#1c4321" stop-opacity=".8"/><stop offset="1" stop-color="#1c4321" stop-opacity=".35"/></linearGradient>
                        <linearGradient id="fadeB" x1="0" x2="1"><stop offset="0" stop-color="#1e1e1e"/><stop offset=".4" stop-color="#666"/><stop offset="1" stop-color="#888"/></linearGradient>
                        <linearGradient id="fadeP" x1="0" y1="0" x2="1" y2="1"><stop offset="0" stop-color="#fff" stop-opacity="0"/><stop offset="1" stop-color="#fff" stop-opacity=".3"/></linearGradient>
                    </defs>
                    <!-- reflections over the ribbon -->
                    <path d="M1059 36l14 3 24 18-7 16-10-2-28-20z" fill="#888" opacity=".13"/>
                    <path d="M1130 92l28-2-34 26z" fill="#8cd0f0" opacity=".35"/>
                    <path d="M838 96l35-25 8-5 16 30-23 16-30-2z" fill="#b8b8d0" opacity=".1"/>
                    <!-- yellow part -->
                    <g transform="translate(1040 90) scale(.33333)">
                        <path d="M0 75l45-7 30 14 30 120-90-27-15-25z" fill="#3c7896" opacity=".6"/>
                        <path d="M75 82l85-14 31 37-43 77 70 34 4 69-100-25-17-58z" fill="#777" opacity=".65"/>
                        <path d="M400 92h98l-8 130-90-60z" fill="#cfe6cf" opacity=".4"/>
                        <path d="M222 246l268 5-23 21-75 24-120 1-50-12z" fill="#ffff26" opacity=".25"/>
                        <path d="M485 222l35-7 70 35-120 20z" fill="url(#fadeL)"/>
                        <path d="M638 252l22-48 52 4 90 52z" fill="url(#fadeL)"/>
                        <path d="M122 260L222 285 225 292 272 297 323 229 392 296 467 272 481 250 1275 264 1402 697 1365 757 405 787 170 717 137 617 107 512 137 470 115 450 107 345z" fill="#ffff26"/>
                        <path d="M92 518l15-5 76 73-9 34-27 2z" fill="#858313"/>
                        <path d="M130 630L173 618 211 657 315 654 330 628 344 624 452 713 575 740 612 683 714 700 735 687 1402 697 1372 1050 1125 1050 1070 995 1118 920 1100 870 1055 870 994 907 924 887 905 902 780 908 692 885 570 940 576 968 455 1027 437 1062 362 1031 298 1081 227 1021 149 1083 97 969 115 935 144 895 131 797 93 721 123 692z" fill="#918812"/>
                        <path d="M735 687L790 655 836 665 858 655 868 643 920 616 935 633 965 690z" fill="url(#fadeT)"/>
                        <path d="M962 690l13 24h45l20-22z" fill="#ffff26" opacity=".75"/>
                        <path d="M1040 692L1065 660 1110 655 1130 628 1150 624 1213 640 1225 695z" fill="url(#fadeR)"/>
                        <path d="M1225 697l55 55 40-10 60-45z" fill="#ffff26" opacity=".12"/>
                        <path d="M415 893l70-8 70 43 68-124 45 22 12 41-110 73 6 26-124 63-58-88z" fill="#b9ae18"/>
                        <path d="M677 865l15 20-30 86-87-2-6-26z" fill="#111"/>
                        <path d="M730 868L1055 870 994 907 924 887 905 902 780 908z" fill="url(#fadeY)"/>
                        <path d="M1118 871L1027 1043 1125 1050 1070 995 1118 920z" fill="#d6d29c"/>
                        <path d="M1125 1055l80 2 40 22 20-5 6-24z" fill="#d8d5a8" opacity=".6"/>
                        <path d="M1275 1050h97l10 55-120-26z" fill="#aaa" opacity=".15"/>
                        <path d="M490 251L1275 264 1403 698 1371 1049 1125 1044M1403 698L850 689M1118 871L850 867M1118 871L1108 890" class="edge"/>
                        <path d="M490 251L135 244 130 400M850 689L720 687M850 867L740 865M1118 871L1027 1043 1125 1044" class="edge soft"/>
                    </g>
                    <!-- green part -->
                    <g transform="translate(640 400) scale(.45918 .33333)">
                        <path d="M632 53l12-6 45 48-38 56-38-5z" fill="#48a455"/>
                        <path d="M652 150l62 84-17 20-50-20z" fill="#d6d6d6"/>
                        <path d="M213 252l45-25 94-62 18 5 105-4 25 16 61-41 22 12 68-5-6 92 52 14 28-24 25-65 18-7 63 49 20-32h25l23 61h27l16-59 37-20 26 46 49 19 34-23 24 13 45 90 15-12 45-2 54 33-7 30 26 48 16 17-30 68 11 20-7 92h75l45 30 52-5 13 78-17 100-890 397-156-265 31-160-306-335z" fill="#4eb55a"/>
                        <path d="M213 252l14-4-35 100-17 12-5 75-43 5z" fill="#fff" opacity=".4"/>
                        <path d="M258 227l94-62 18 7 60 4-200 68z" fill="#fff" opacity=".25"/>
                        <path d="M735 875l55-106h57l68-60h30l83-31 10-13 57 43 29-10 36-68 15-10 15 7 66-39 19 9-3 58-15 30-27 27v26l53 43 50-31 14-35 48-4 17 15h36l-7 164-883 424v-201l30-41 46 27 46-30 24 11 41-17 3-80 9-12 63-3 13-23v-30l-25-41z" fill="#285c2d"/>
                        <path d="M30 511l100-38 28 185z" fill="#4eb55a"/>
                        <path d="M30 511l128 147-31-218 306 335-31 160 156 178v201L37 692z" fill="#1c4321"/>
                        <path d="M127 440l45-9 13 29 2 65 68 5 7 77z" fill="url(#fadeD)"/>
                        <path d="M262 605l21 15 19 70 33 5 44 70 49-34 5 44z" fill="#1c4321" opacity=".75"/>
                        <path d="M428 731l37 37-33 82-30 3 31-78z" fill="#1c4321" opacity=".65"/>
                        <path d="M402 935l23 5 20 45 57-4 23 54v25z" fill="#285c2d" opacity=".6"/>
                        <path d="M433 775l-33 78-12 72 14 10zM525 1060l33 53-10 49-33-20z" fill="#4eb55a" opacity=".35"/>
                        <path d="M558 1113l30-41 46 27z" fill="#3c9046"/>
                        <path d="M745 1063l3-80 9-12h50l5 26-68 32z" fill="#347a3b" opacity=".8"/>
                        <path d="M262 950l43-24 20 20-3 50 33 50v20zM390 1130l42-24 45 50v40l40 60z" fill="#aaa" opacity=".25"/>
                        <path d="M580 153l34-8 38 6-9 83 5 6-22 70-29-8v-72l-14-24z" fill="#1c3a20"/>
                        <path d="M523 306l45 25 9 80-75 5-7-44z" fill="#19351d"/>
                        <path d="M501 416l78-4-21 70-61-3z" fill="#37823f"/>
                        <path d="M460 495l31-5 28 88-22 30h-56z" fill="#19371d"/>
                        <path d="M848 264l46 61-49 60-26-70z" fill="#122814"/>
                        <path d="M455 608h20l-35 95z" fill="#3d9448" opacity=".6"/>
                        <path d="M1345 610l55 17 52-5 13 78-17 3z" fill="url(#fadeP)"/>
                        <path d="M1448 703h17l-8 40-9 10z" fill="#fff" opacity=".4"/>
                        <path d="M1460 726l36 63-38 90h-17l-19-74 24-79z" fill="url(#fadeB)"/>
                        <path d="M1441 890v-14l-30 14-20 26z" fill="#a9bfab"/>
                        <path d="M1310 950l77-35-5 40-29 34-40-30z" fill="url(#fadeG)"/>
                        <path d="M1238 938l50-36 22 50-72 36z" fill="url(#fadeW)"/>
                        <path d="M1165 1022l75-36-1 52-15 10-46-40z" fill="url(#fadeG)"/>
                        <path d="M1137 1040l30-36 25 18-45 22zM1042 1084l38-57 57 13z" fill="url(#fadeW)"/>
                        <path d="M915 1142l127-58-28 54-27 10-70-10z" fill="url(#fadeG)"/>
                        <path d="M826 1190l71-35-7 51h-50z" fill="url(#fadeG)"/>
                        <path d="M743 1226l38-18-20 35zM620 1287l59-28-5 42-17 4z" fill="url(#fadeG)"/>
                        <path d="M679 1257v-15l34-42 28 25zM781 1205l17-32h12l18 15zM897 1152l18-16 15 5z" fill="url(#fadeW)"/>
                        <path d="M530 1280l40-55 27 15 25 40-64 34z" fill="#fff" opacity=".15"/>
                        <path d="M190 880l70 75-65-5zM355 1065l50 62-40 18-20-10z" fill="#999" opacity=".08"/>
                        <path d="M213 252L127 440l3 33-100 38 7 181 521 622M127 440l306 335-31 160 156 178v201M30 511l128 147-31-218M1448 703l-7 187M558 1314l520-250" class="edge"/>
                        <path d="M213 252l210-76M558 1113l254-117M1448 703l-220 103M1448 703l-100-90M1078 1064l363-174" class="edge soft"/>
                    </g>
                </svg>
            </div>

            <div class="hud">
                <button aria-label="Zoom to fit"><svg class="icon"><use href="#i-fit"/></svg></button>
                <button aria-label="Zoom to area"><svg class="icon"><use href="#i-area"/></svg></button>
                <button class="bold" aria-label="Previous view"><svg class="icon"><use href="#i-prevview"/></svg></button>
                <button class="bold" aria-label="Section view"><svg class="icon"><use href="#i-section"/></svg></button>
                <button class="bold" aria-label="Annotation views"><svg class="icon"><use href="#i-dynamic"/></svg></button>
                <button class="bold wide" aria-label="View orientation"><svg class="icon"><use href="#i-cubewire"/></svg><i class="caret"></i></button>
                <button class="bold wide" aria-label="Display style"><svg class="icon"><use href="#i-cube"/></svg><i class="caret"></i></button>
                <button class="wide" aria-label="Hide or show items"><svg class="icon"><use href="#i-eye"/></svg><i class="caret"></i></button>
                <button class="bold" aria-label="Edit appearance"><svg class="icon"><use href="#i-appear"/></svg></button>
                <button class="bold wide" aria-label="Apply scene"><svg class="icon"><use href="#i-scene"/></svg><i class="caret"></i></button>
                <button class="bold wide" aria-label="View settings"><svg class="icon"><use href="#i-monitor"/></svg><i class="caret"></i></button>
            </div>

            <div class="doc-controls">
                <button aria-label="Previous pane"><svg class="icon"><use href="#i-prev"/></svg></button>
                <button aria-label="Next pane"><svg class="icon"><use href="#i-next"/></svg></button>
                <button aria-label="Minimize document"><svg class="icon"><use href="#i-min"/></svg></button>
                <button aria-label="Restore document"><svg class="icon"><use href="#i-restore"/></svg></button>
                <button aria-label="Close document"><svg class="icon"><use href="#i-x"/></svg></button>
            </div>

            <nav class="task-pane">
                <button aria-label="Resources"><svg class="icon"><use href="#i-home"/></svg></button>
                <button aria-label="Design library"><svg class="icon"><use href="#i-books"/></svg></button>
                <button aria-label="File explorer"><svg class="icon"><use href="#i-folder"/></svg></button>
                <button aria-label="View palette"><svg class="icon"><use href="#i-palette"/></svg></button>
                <button class="active" aria-label="Appearances"><svg class="icon"><use href="#i-ball"/></svg></button>
                <button aria-label="Custom properties"><svg class="icon"><use href="#i-list"/></svg></button>
            </nav>

            <div class="view-label">
                <svg class="triad" viewBox="0 0 50 58" aria-hidden="true">
                    <path d="M13 36V18" stroke="#1a6a1a" stroke-width="3"/><path d="M13 10l4 9H9z" fill="#2da02d" stroke="#145014"/>
                    <path d="M13 37l20 1" stroke="#d22" stroke-width="3"/><path d="M42 39l-9-4v8z" fill="#e02020" stroke="#901010"/>
                    <path d="M13 36l-3 8" stroke="#101080" stroke-width="3"/><circle cx="9" cy="46" r="4" fill="#1a1ac0"/>
                    <path d="M9.500 0l3.500 4 3.500-4M13 4v5" stroke="#1a8a1a" fill="none"/><path d="M44 35l5 8M49 35l-5 8" stroke="#f22"/><path d="M4 47h5l-5 8h5" stroke="#11f" fill="none"/>
                </svg>
                <strong>Camera1</strong>
            </div>
        </section>
    </main>

    <nav class="model-tabs">
        <div class="steppers">
            <button aria-label="First tab" disabled><svg viewBox="0 0 14 14"><path d="M3 2v10M11 2v10L5 7z"/></svg></button>
            <button aria-label="Previous tab" disabled><svg viewBox="0 0 14 14"><path d="M10 2v10L4 7z"/></svg></button>
            <button aria-label="Next tab" disabled><svg viewBox="0 0 14 14"><path d="M4 2v10l6-5z"/></svg></button>
            <button aria-label="Last tab" disabled><svg viewBox="0 0 14 14"><path d="M11 2v10M3 2v10l6-5z"/></svg></button>
        </div>
        <button class="tab active">Model</button><button class="tab">3D Views</button><button class="tab study">Motion Study 1</button>
    </nav>

    <div class="filter-bar">
        <button aria-label="Toggle filters" disabled><svg class="icon"><use href="#i-funnel"/></svg></button>
        <button aria-label="Clear filters" disabled><svg class="icon"><use href="#i-funnels"/></svg></button>
        <button aria-label="All filters"><svg class="icon"><use href="#i-funnelsp"/></svg></button>
        <span class="select-tool"><button class="pressed" aria-label="Select"><svg class="icon"><use href="#i-cursor"/></svg></button><button class="drop" aria-label="Select options"><i class="caret"></i></button></span>
        <button aria-label="Select other" disabled><svg class="icon"><use href="#i-cursors"/></svg></button>
        <i class="bar"></i>
        <button aria-label="Vertices"><svg class="icon f"><use href="#t-1"/></svg></button>
        <button aria-label="Edges"><svg class="icon f"><use href="#t-2"/></svg></button>
        <button aria-label="Faces"><svg class="icon f"><use href="#t-3"/></svg></button>
        <button aria-label="Surface bodies"><svg class="icon f"><use href="#t-4"/></svg></button>
        <button aria-label="Solid bodies"><svg class="icon f"><use href="#t-5"/></svg></button>
        <button aria-label="Axes"><svg class="icon f"><use href="#t-6"/></svg></button>
        <button aria-label="Planes"><svg class="icon f"><use href="#t-7"/></svg></button>
        <button aria-label="Sketch points"><svg class="icon f"><use href="#t-8"/></svg></button>
        <button aria-label="Sketches"><svg class="icon f"><use href="#t-9"/></svg></button>
        <button aria-label="Sketch segments"><svg class="icon f"><use href="#t-10"/></svg></button>
        <button aria-label="Midpoints"><svg class="icon f"><use href="#t-11"/></svg></button>
        <button aria-label="Center marks"><svg class="icon f"><use href="#t-12"/></svg></button>
        <button aria-label="Centerlines"><svg class="icon f"><use href="#t-13"/></svg></button>
        <button aria-label="Dimensions"><svg class="icon f"><use href="#t-14"/></svg></button>
        <button aria-label="Surface finish"><svg class="icon f"><use href="#t-15"/></svg></button>
        <button aria-label="Geometric tolerances"><svg class="icon f"><use href="#t-16"/></svg></button>
        <button aria-label="Notes"><svg class="icon f"><use href="#t-17"/></svg></button>
        <button aria-label="Datums"><svg class="icon f"><use href="#t-18"/></svg></button>
        <button aria-label="Welds"><svg class="icon f"><use href="#t-19"/></svg></button>
        <button aria-label="Weld beads"><svg class="icon f"><use href="#t-20"/></svg></button>
        <button aria-label="Datum targets"><svg class="icon f"><use href="#t-21"/></svg></button>
        <button aria-label="Cosmetic threads"><svg class="icon f"><use href="#t-22"/></svg></button>
        <button aria-label="Blocks"><svg class="icon f"><use href="#t-23"/></svg></button>
        <button aria-label="Center of mass"><svg class="icon f"><use href="#t-24"/></svg></button>
        <button aria-label="Connection points"><svg class="icon f"><use href="#t-25"/></svg></button>
        <button aria-label="Routing points"><svg class="icon f"><use href="#t-26"/></svg></button>
        <i class="bar end"></i>
    </div>

    <footer class="status">
        <span class="hint">Saves the active document with a new name.</span>
        <span class="cell">Under Defined</span>
        <span class="cell edit">Editing Assembly</span>
        <span class="cell blank"></span>
        <button class="units">MMGS <i class="caret up"></i></button>
        <svg class="icon"><use href="#i-tag"/></svg>
    </footer>
</body>
</html>
```
FILE: styles.css
```css
* {
    box-sizing: border-box;
}
body {
    margin: 0;
    min-height: 100vh;
    display: flex;
    flex-direction: column;
    background: #f7f7f7;
    color: #000;
    font: 12px/16px "Open Sans", "Noto Sans", sans-serif;
    overflow: hidden;
}
button {
    font: inherit;
    color: inherit;
    background: none;
    border: 0;
    padding: 0;
    display: flex;
    align-items: center;
    justify-content: center;
    white-space: nowrap;
}
button:disabled {
    color: #b4b4b4;
}
ul {
    list-style: none;
    margin: 0;
    padding: 0;
}
.sprite {
    position: absolute;
    width: 0;
    height: 0;
}
.symbols {
    display: none;
}
.icon {
    width: 18px;
    height: 18px;
    flex: none;
}
.icon-3d {
    font: bold 9px "Liberation Sans", sans-serif;
}
.icon-letter {
    font: bold 12px "Liberation Serif", serif;
    text-anchor: middle;
}
.icon-letter.small {
    font: bold 10px "Liberation Sans", sans-serif;
}
.icon-tiny {
    font: bold 8px "Liberation Sans", sans-serif;
    text-anchor: middle;
}
.steel {
    fill: #1f6f98;
}
.caret {
    width: 0;
    height: 0;
    border: 3px solid transparent;
    border-top-color: #333;
    border-bottom: 0;
}
button:disabled .caret {
    border-top-color: #aaa;
}
.caret.up {
    border-top: 0;
    border-bottom: 3px solid #333;
}

/* title bar */
.title-bar {
    position: relative;
    z-index: 10;
    height: 31px;
    padding-top: 1px;
    display: flex;
    align-items: center;
    border-bottom: 1px solid #808080;
}
.logo {
    align-self: flex-start;
    width: 145px;
    height: 35px;
    margin: -1px 0 0 10px;
    flex: none;
    display: flex;
    align-items: center;
    gap: 4px;
    padding: 0 0 6px 4px;
    border: 1px solid #999;
    border-top: 0;
    background: linear-gradient(160deg, #fff 50%, #ddd);
    color: #d8232a;
}
.logo svg {
    width: 29px;
    height: 29px;
    flex: none;
}
.brand {
    font: italic 16px/20px "Open Sans", sans-serif;
    padding-top: 10px;
}
.brand b {
    font-weight: 800;
}
.menu-bar {
    height: 29px;
    margin-left: 20px;
    display: flex;
    align-items: center;
    border-right: 2px solid #999;
}
.menu-bar button {
    height: 24px;
    padding: 0 7px;
}
.menu-bar .open {
    border: 1px solid #aaa;
    background: #fff;
}
.menu-bar .pin {
    padding: 0 6px 0 14px;
}
.quick-tools {
    display: flex;
    align-items: center;
    margin-left: 14px;
}
.quick-tools > button {
    width: 39px;
    height: 26px;
    gap: 6px;
}
.quick-tools > .solo {
    width: 26px;
}
.select-tool {
    display: flex;
    height: 26px;
    border: 1px solid #888;
}
.select-tool .pressed {
    width: 28px;
    background: #b0b0b0;
    border-right: 1px solid #888;
}
.select-tool .drop {
    width: 12px;
    background: #fff;
}
.doc-title {
    flex: 1;
    margin: 0;
    font-size: 11px;
    font-weight: normal;
    text-align: center;
}
.title-right {
    display: flex;
    align-items: center;
}
.search {
    width: 202px;
    height: 23px;
    margin-right: 8px;
    display: flex;
    align-items: center;
    gap: 2px;
    padding: 0 3px 0 4px;
    border: 1px solid #bbb;
}
.search input {
    flex: 1;
    min-width: 0;
    height: 19px;
    padding: 0 2px;
    border: 0;
    background: #efeff4;
    font: 11px "Open Sans", sans-serif;
}
.search input::placeholder {
    color: #666;
}
.search button {
    gap: 4px;
    padding-left: 2px;
}
.help {
    width: 18px;
    font: bold 18px/24px "Open Sans", sans-serif;
    color: #444;
}
.help-drop {
    width: 17px;
}
.win {
    width: 26px;
    color: #333;
}

/* File menu */
.file-menu {
    position: absolute;
    top: 32px;
    left: 175px;
    width: 301px;
    padding: 2px;
    border: 1px solid #a0a0a0;
    background: #f7f7f7;
    box-shadow: 2px 2px 2px #777;
}
.file-menu button {
    width: 100%;
    height: 24px;
    padding: 0 23px 0 4px;
    justify-content: flex-start;
    border: 1px solid transparent;
}
.file-menu .current {
    background: #fff;
    border-color: #aaa;
}
.file-menu span {
    margin-left: 8px;
    flex: 1;
    text-align: left;
}
.file-menu kbd {
    font: inherit;
}
.file-menu .line {
    height: 10px;
    margin-left: 32px;
    border-bottom: 5px solid transparent;
    background: linear-gradient(#c0c0c0, #c0c0c0) bottom / 100% 1px no-repeat padding-box;
}
.sub-arrow {
    border: 4px solid transparent;
    border-left-color: #555;
    border-right: 0;
    margin-right: -14px;
}

/* ribbon */
.ribbon-row {
    height: 87px;
    display: flex;
}
.ribbon {
    flex: 1;
    display: flex;
    padding: 6px 0 2px;
    border-right: 1px solid #808080;
    border-bottom: 1px solid #808080;
}
.group {
    display: flex;
    padding: 0 1px;
    border-right: 1px solid #c4c4c4;
}
.group:last-child {
    border-right: 0;
}
.group.first {
    width: 494px;
    padding-left: 3px;
}
.group button {
    flex-direction: column;
    justify-content: flex-start;
    padding: 12px 3px 0;
    line-height: 13px;
    text-align: center;
}
.group .icon {
    margin-bottom: 3px;
}
.group .has-drop {
    position: relative;
    padding-top: 5px;
}
.group .has-drop .caret {
    margin-top: 15px;
}
.group .last {
    margin-left: auto;
    padding-top: 26px;
}
.side-tools {
    width: 365px;
    height: 33px;
    display: flex;
    border: 1px solid #808080;
    border-left: 0;
}
.tool-strip {
    display: flex;
    align-items: center;
    background: radial-gradient(circle, #999 1px, transparent 1px) 2px 0 / 4px 4px repeat-y;
}
.tool-strip button {
    width: 27px;
}
.capture {
    width: 102px;
    padding-left: 12px;
    border-right: 1px solid #808080;
}
.align {
    flex: 1;
    padding-left: 13px;
}
.bar {
    width: 1px;
    height: 22px;
    background: #808080;
    margin: 0 3px;
}

/* sidebar */
.workspace {
    flex: 1;
    display: flex;
    margin-top: -1px;
}
.sidebar {
    width: 254px;
    display: flex;
    flex-direction: column;
    border-right: 1px solid #808080;
    position: relative;
    z-index: 5;
    background: #f7f7f7;
}
.command-tabs {
    width: 490px;
    height: 23px;
    display: flex;
    background: #d4d4d4;
    border: solid #808080;
    border-width: 1px 1px 1px 0;
    color: #333;
    flex: none;
}
.command-tabs button {
    flex: none;
    padding: 0 8px;
    border-left: 1px solid #808080;
}
.command-tabs .active {
    width: 67px;
    padding: 0;
    border: 0;
    background: #f7f7f7;
    font-weight: 600;
}
.command-tabs .mbd {
    margin-left: auto;
}
.splitter {
    height: 16px;
    margin: 2px 0 4px;
    border: solid #c0c0c0;
    border-width: 1px 0;
    display: flex;
    align-items: center;
    justify-content: center;
}
.splitter i {
    width: 6px;
    height: 6px;
    border-radius: 3px;
    border: 1px solid #888;
    background: #bbb;
}
.panel-tabs {
    height: 26px;
    display: flex;
    flex: none;
    background: #d4d4d4;
    border: solid #808080;
    border-width: 1px 0;
}
.panel-tabs button {
    width: 40px;
    border-right: 1px solid #808080;
}
.panel-tabs .active {
    background: #f7f7f7;
    margin-bottom: -1px;
}
.filter {
    height: 26px;
    margin-left: 3px;
    padding-left: 2px;
    gap: 2px;
    justify-content: flex-start;
    border: 1px solid #c0c0c0;
    flex: none;
}
.tree {
    padding-top: 1px;
    border-bottom: 2px solid #2f86d0;
    box-shadow: 0 1px #1010a0;
}
.tree li {
    height: 22px;
    display: flex;
    align-items: center;
    white-space: nowrap;
    overflow: hidden;
    padding-left: 7px;
}
.tree .root {
    padding-left: 2px;
}
.tree .child {
    padding-left: 30px;
}
.tree .icon {
    margin-right: 5px;
}
.twist {
    width: 18px;
    height: 8px;
    flex: none;
    background: #555;
    clip-path: polygon(1px 0, 5px 4px, 1px 8px);
}
.twist.down {
    clip-path: polygon(0 2px, 8px 2px, 4px 6px);
}
.twist.none {
    background: none;
}
.scroll {
    margin-top: auto;
    height: 17px;
    display: flex;
    align-items: stretch;
    background: #f0f0f0;
}
.scroll svg {
    width: 16px;
    height: 16px;
    fill: none;
    stroke: #444;
    stroke-width: 2;
}
.track {
    flex: 1;
}
.thumb {
    display: block;
    width: 51%;
    height: 15px;
    margin-top: 1px;
    background: #cdcdcd;
}

/* viewport */
.viewport {
    flex: 1;
    position: relative;
    display: flex;
    background: #9e9eb0;
    border-bottom: 1px solid #808080;
}
.camera-frame {
    flex: 1;
    position: relative;
    margin: 1px 381px 0 127px;
    border: 2px dashed #7c7c9c;
    background: #fff;
}
.model {
    position: absolute;
    top: -2px;
    left: -2px;
    width: calc(100% + 4px);
    height: calc(100% + 4px);
    overflow: visible;
    pointer-events: none;
}
.edge {
    fill: none;
    stroke: #0a140a;
    stroke-width: 1;
    vector-effect: non-scaling-stroke;
}
.edge.soft {
    opacity: .35;
}
.hud {
    position: absolute;
    top: 6px;
    left: 0;
    right: 0;
    display: flex;
    justify-content: center;
}
.hud button {
    width: 26px;
    height: 20px;
    gap: 6px;
    opacity: .4;
}
.hud .bold {
    opacity: .65;
}
.hud .wide {
    width: 40px;
}
.doc-controls {
    position: absolute;
    top: 7px;
    right: 6px;
    display: flex;
    color: #6e6e78;
}
.doc-controls button {
    width: 26px;
}
.task-pane {
    position: absolute;
    top: 51px;
    right: 0;
    width: 26px;
    border: 1px solid #808080;
    border-right: 0;
    background: #d4d4d4;
}
.task-pane button {
    width: 100%;
    height: 24px;
    border-bottom: 1px solid #808080;
}
.task-pane button:last-child {
    border-bottom: 0;
}
.task-pane .active {
    background: #f7f7f7;
}
.view-label {
    position: absolute;
    left: 12px;
    bottom: 0;
    font: bold 12px/18px "DejaVu Sans", sans-serif;
}
.triad {
    display: block;
    width: 50px;
    height: 58px;
    margin: 0 0 18px 16px;
}

/* bottom rows */
.model-tabs {
    height: 15px;
    display: flex;
    border-left: 2px solid #9ab8b4;
}
.steppers {
    display: flex;
    width: 65px;
    margin-left: 25px;
    margin-right: 5px;
    border-top: 1px solid #000;
    background: #b0b0b0;
}
.steppers button {
    flex: 1;
    border-right: 1px solid #888;
}
.steppers svg {
    width: 12px;
    height: 12px;
    fill: #888;
    stroke: #888;
}
.tab {
    padding: 0 8px;
    line-height: 14px;
    background: #d4d4d4;
    border-right: 1px solid #808080;
}
.tab.active {
    background: none;
    font-weight: bold;
}
.tab.study {
    padding-right: 14px;
}
.filter-bar {
    height: 34px;
    display: flex;
    align-items: center;
    padding-left: 14px;
    border-bottom: 1px solid #808080;
    background: radial-gradient(circle, #999 1px, transparent 1px) 3px 4px / 4px 4px repeat-y;
}
.filter-bar > button {
    width: 27px;
}
.filter-bar .f {
    width: 22px;
}
.filter-bar .bar {
    height: 22px;
    margin: 0 4px 0 2px;
}
.filter-bar .end {
    height: 32px;
    margin: 0 6px;
}
.status {
    height: 20px;
    display: flex;
    align-items: center;
    padding: 0 2px 1px 1px;
}
.hint {
    flex: 1;
}
.cell {
    padding: 0 6px 0 3px;
    border-right: 1px solid #ccc;
}
.cell.edit {
    margin-left: 6px;
    border-left: 1px solid #ccc;
}
.cell.blank {
    width: 16px;
    height: 16px;
}
.units {
    width: 112px;
    gap: 18px;
    margin-right: 38px;
}
```
